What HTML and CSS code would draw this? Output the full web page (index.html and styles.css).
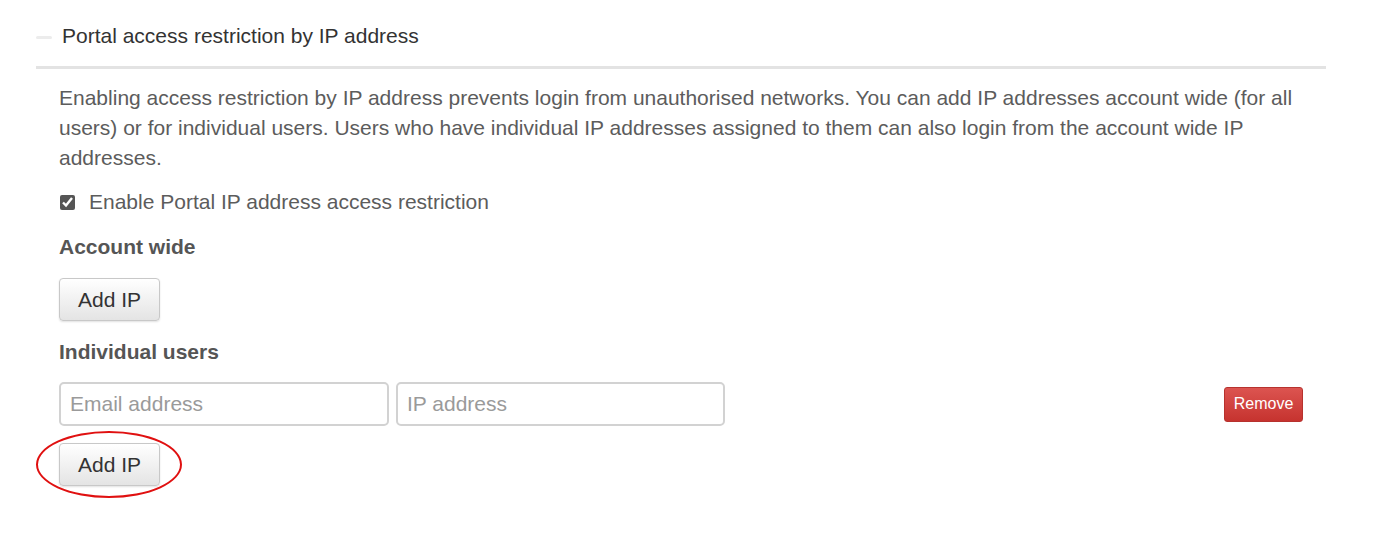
FILE: index.html
```html
<!DOCTYPE html>
<html>
<head>
<meta charset="utf-8">
<link rel="stylesheet" href="styles.css">
</head>
<body>
<div class="panel">
  <div class="panel-head">
    <span class="toggle"></span>
    <span class="title">Portal access restriction by IP address</span>
  </div>
  <div class="panel-body">
    <p class="desc">Enabling access restriction by IP address prevents login from unauthorised networks. You can add IP addresses account wide (for all users) or for individual users. Users who have individual IP addresses assigned to them can also login from the account wide IP addresses.</p>
    <label class="check"><input type="checkbox" checked> Enable Portal IP address access restriction</label>
    <h4 class="sub">Account wide</h4>
    <button class="btn">Add IP</button>
    <h4 class="sub sub2">Individual users</h4>
    <div class="row">
      <input class="field email" type="text" placeholder="Email address">
      <input class="field ip" type="text" placeholder="IP address">
      <span class="spacer"></span>
      <button class="btn-remove">Remove</button>
    </div>
    <div class="last">
      <button class="btn">Add IP</button>
      <span class="circle"></span>
    </div>
  </div>
</div>
</body>
</html>
```
FILE: styles.css
```css
* { box-sizing: border-box; }
html, body { min-height: 553px; }
body {
  margin: 0;
  background: #fff;
  font-family: "Liberation Sans", Arial, sans-serif;
  color: #555;
}
.panel {
  padding: 22px 48px 60px 36px;
}
.panel-head {
  display: flex;
  align-items: center;
  height: 28px;
  border-bottom: 3px solid #e3e3e3;
  box-sizing: content-box;
  padding-bottom: 16px;
}
.toggle {
  width: 16px;
  height: 3px;
  background: #ececec;
  border-radius: 2px;
  margin-right: 10px;
  margin-top: 2px;
}
.title {
  font-size: 21px;
  color: #333;
}
.panel-body {
  padding: 14px 23px 0 23px;
}
.desc {
  margin: 0;
  font-size: 21px;
  line-height: 30px;
  color: #5c5c5c;
}
.check {
  display: flex;
  align-items: center;
  margin-top: 17px;
  font-size: 21px;
  color: #5c5c5c;
}
.check input {
  width: 15px;
  height: 15px;
  margin: 0 14px 0 1px;
  accent-color: #555;
}
.sub {
  margin: 21px 0 0;
  font-size: 21px;
  font-weight: bold;
  color: #555;
  line-height: 24px;
}
.sub2 { margin-top: 19px; }
.btn {
  display: block;
  margin-top: 19px;
  width: 101px;
  height: 43px;
  border: 1px solid #c8c8c8;
  border-radius: 4px;
  background: linear-gradient(#ffffff, #e4e4e4);
  box-shadow: 0 1px 2px rgba(0,0,0,0.12);
  font-family: "Liberation Sans", Arial, sans-serif;
  font-size: 21px;
  color: #333;
  padding: 0;
}
.row {
  display: flex;
  align-items: center;
  margin-top: 18px;
  gap: 7px;
}
.field {
  height: 44px;
  border: 2px solid #d2d2d2;
  border-radius: 5px;
  padding: 0 9px;
  font-family: "Liberation Sans", Arial, sans-serif;
  font-size: 21px;
  color: #333;
  outline: none;
}
.field::placeholder { color: #9a9a9a; }
.email { width: 330px; }
.ip { width: 329px; }
.spacer { flex: 1; }
.btn-remove {
  width: 79px;
  height: 35px;
  border: 1px solid #b7322e;
  border-radius: 3px;
  background: linear-gradient(#dc5450, #c6332f);
  color: #fff;
  font-family: "Liberation Sans", Arial, sans-serif;
  font-size: 16px;
  padding: 0;
}
.last {
  position: relative;
}
.last .btn { margin-top: 17px; }
.circle {
  position: absolute;
  left: -23px;
  top: -12px;
  width: 146px;
  height: 67px;
  border: 2px solid #e01010;
  border-radius: 50%;
}
```
